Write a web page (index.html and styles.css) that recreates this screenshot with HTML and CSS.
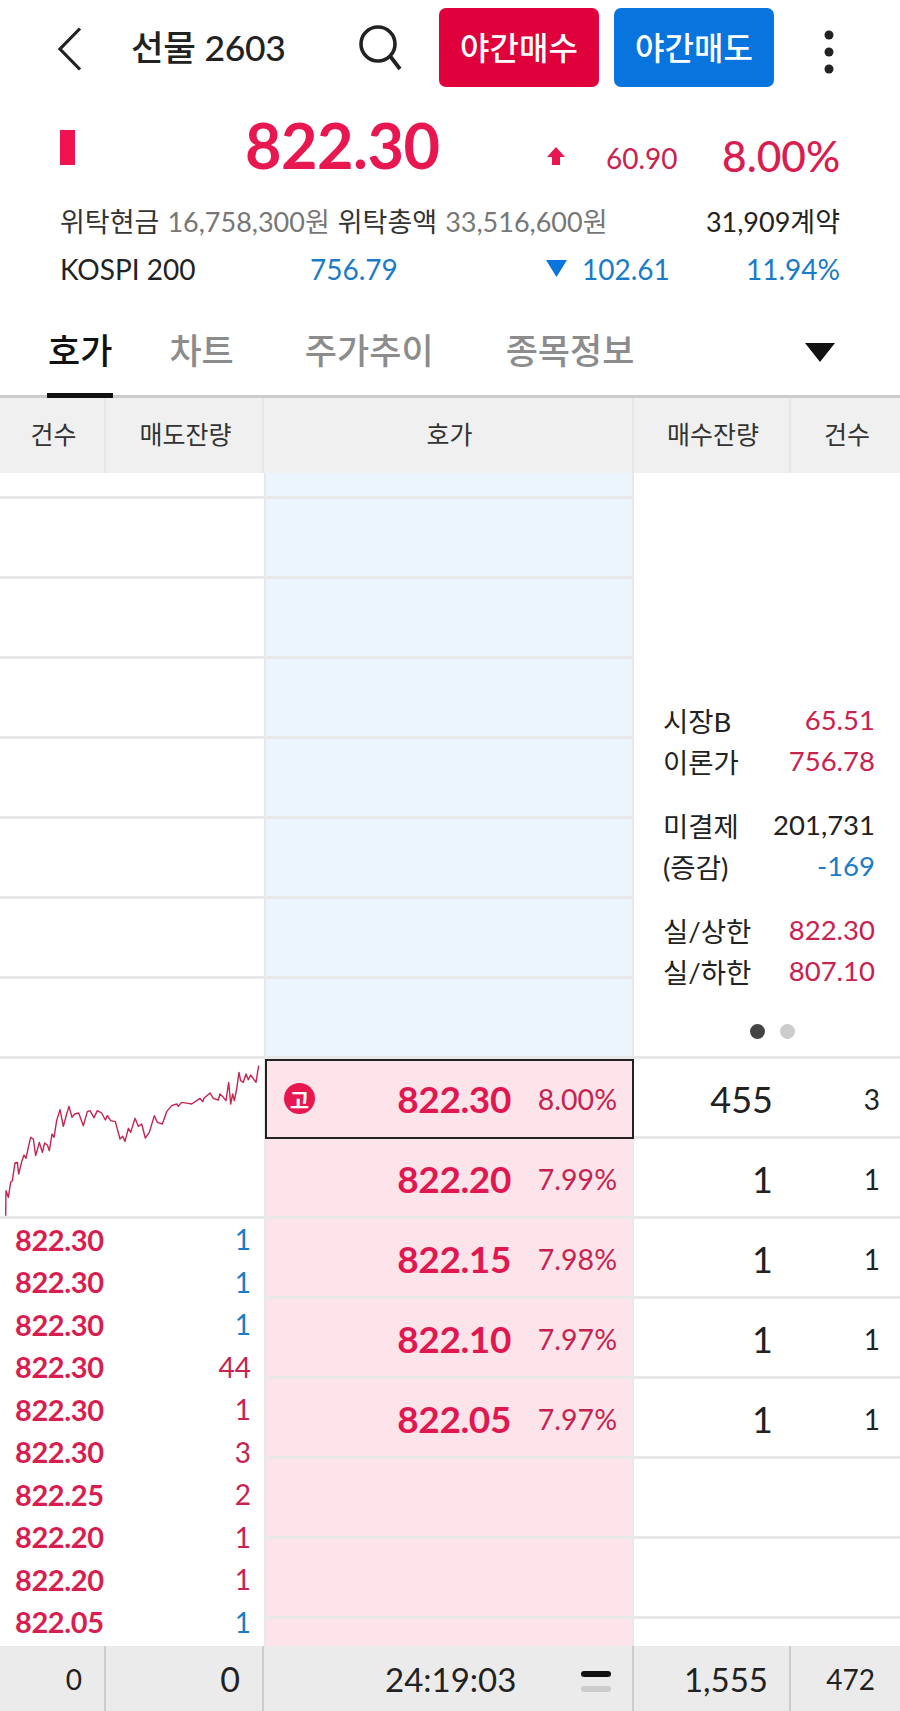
FILE: index.html
```html
<!DOCTYPE html>
<html lang="ko">
<head>
<meta charset="utf-8">
<title>선물 2603</title>
<link rel="stylesheet" href="styles.css">
</head>
<body>
<div class="page">
  <header class="topbar">
    <svg class="back" width="24" height="44" viewBox="0 0 24 44"><path d="M22 1.5 2 22l20 20.5" fill="none" stroke="#222" stroke-width="3.2"/></svg>
    <div class="title">선물 2603</div>
    <svg class="search" width="44" height="46" viewBox="0 0 44 46"><circle cx="20" cy="19" r="17" fill="none" stroke="#222" stroke-width="3.6"/><path d="M32 31l10 13" stroke="#222" stroke-width="3.8" fill="none"/></svg>
    <button class="btn buy">야간매수</button>
    <button class="btn sell">야간매도</button>
    <svg class="kebab" width="10" height="44" viewBox="0 0 10 44"><circle cx="5" cy="5" r="4.5" fill="#222"/><circle cx="5" cy="22" r="4.5" fill="#222"/><circle cx="5" cy="39" r="4.5" fill="#222"/></svg>
  </header>

  <section class="quote">
    <div class="mark"></div>
    <div class="bigprice">822.30</div>
    <svg class="uparrow" width="18" height="18" viewBox="0 0 18 18"><path d="M9 0l9 10h-5v8H5v-8H0z" fill="#e8174f"/></svg>
    <div class="diff">60.90</div>
    <div class="rate">8.00%</div>
  </section>

  <section class="info-row">
    <span class="lbl">위탁현금</span><span class="val">16,758,300원</span><span class="lbl gap">위탁총액</span><span class="val">33,516,600원</span>
    <span class="contracts">31,909계약</span>
  </section>
  <section class="index-row">
    <span class="idx-name">KOSPI 200</span>
    <span class="idx-val">756.79</span>
    <svg class="downarrow" width="21" height="17" viewBox="0 0 21 17"><path d="M0 0h21L10.500 17z" fill="#0875de"/></svg>
    <span class="idx-diff">102.61</span>
    <span class="idx-rate">11.94%</span>
  </section>

  <nav class="tabs">
    <a class="tab active">호가</a>
    <a class="tab t2">차트</a>
    <a class="tab t3">주가추이</a>
    <a class="tab t4">종목정보</a>
    <svg class="tabdrop" width="30" height="19" viewBox="0 0 30 19"><path d="M0 0h30L15 19z" fill="#111"/></svg>
  </nav>

  <div class="thead">
    <div class="th">건수</div>
    <div class="th">매도잔량</div>
    <div class="th">호가</div>
    <div class="th">매수잔량</div>
    <div class="th">건수</div>
  </div>

  <main class="book">
    <div class="col-left">
      <div class="row partial"></div>
      <div class="row"></div><div class="row"></div><div class="row"></div><div class="row"></div>
      <div class="row"></div><div class="row"></div><div class="row"></div>
      <div class="chart">
        <svg width="262" height="158" viewBox="0 60 786 474"><polyline fill="none" stroke="#c8224f" stroke-width="4.200" stroke-linejoin="round" points="17,530 18,455 25,475 32,430 37,425 45,372 52,370 56,405 66,365 72,348 78,358 85,325 92,295 100,300 107,350 118,310 127,340 134,312 142,318 148,335 156,285 162,295 170,245 180,212 190,262 200,225 207,202 216,235 224,225 236,222 250,260 262,218 270,215 282,236 292,215 305,222 316,243 322,230 332,245 346,248 360,300 368,292 375,307 385,268 392,280 405,238 415,262 425,255 436,297 448,280 463,230 472,250 487,255 500,218 515,200 530,195 535,202 545,190 565,193 575,195 600,178 608,188 612,178 630,162 640,178 655,183 660,165 670,175 678,185 686,130 692,195 698,165 703,185 710,150 717,100 722,125 730,130 738,105 745,122 752,108 768,130 776,80"/></svg>
      </div>
      <div class="ticks">
        <div class="tick"><b>822.30</b><span class="blue">1</span></div>
        <div class="tick"><b>822.30</b><span class="blue">1</span></div>
        <div class="tick"><b>822.30</b><span class="blue">1</span></div>
        <div class="tick"><b>822.30</b><span class="red">44</span></div>
        <div class="tick"><b>822.30</b><span class="red">1</span></div>
        <div class="tick"><b>822.30</b><span class="red">3</span></div>
        <div class="tick"><b>822.25</b><span class="red">2</span></div>
        <div class="tick"><b>822.20</b><span class="red">1</span></div>
        <div class="tick"><b>822.20</b><span class="red">1</span></div>
        <div class="tick"><b>822.05</b><span class="blue">1</span></div>
      </div>
    </div>

    <div class="col-mid">
      <div class="row partial ask"></div>
      <div class="row ask"></div><div class="row ask"></div><div class="row ask"></div><div class="row ask"></div>
      <div class="row ask"></div><div class="row ask"></div><div class="row ask"></div>
      <div class="row bid cur"><span class="badge">고</span><b class="price">822.30</b><span class="pct">8.00%</span></div>
      <div class="row bid"><b class="price">822.20</b><span class="pct">7.99%</span></div>
      <div class="row bid"><b class="price">822.15</b><span class="pct">7.98%</span></div>
      <div class="row bid"><b class="price">822.10</b><span class="pct">7.97%</span></div>
      <div class="row bid"><b class="price">822.05</b><span class="pct">7.97%</span></div>
      <div class="row bid"></div>
      <div class="row bid"></div>
      <div class="row bid last"></div>
    </div>

    <div class="col-right">
      <div class="panel">
        <div class="stats"><span>시장B</span><span class="red">65.51</span></div>
        <div class="stats"><span>이론가</span><span class="red">756.78</span></div>
        <div class="stats sep"><span>미결제</span><span>201,731</span></div>
        <div class="stats"><span>(증감)</span><span class="blue">-169</span></div>
        <div class="stats sep"><span>실/상한</span><span class="red">822.30</span></div>
        <div class="stats"><span>실/하한</span><span class="red">807.10</span></div>
        <div class="dots"><i class="dot on"></i><i class="dot"></i></div>
      </div>
      <div class="row qty"><span class="q">455</span><span class="c">3</span></div>
      <div class="row qty"><span class="q">1</span><span class="c">1</span></div>
      <div class="row qty"><span class="q">1</span><span class="c">1</span></div>
      <div class="row qty"><span class="q">1</span><span class="c">1</span></div>
      <div class="row qty"><span class="q">1</span><span class="c">1</span></div>
      <div class="row qty"></div>
      <div class="row qty"></div>
    </div>
  </main>

  <footer class="tfoot">
    <div class="tf f1">0</div>
    <div class="tf f2">0</div>
    <div class="tf f3"><span class="time">24:19:03</span><span class="eq"><i class="eq-a"></i><i class="eq-b"></i></span></div>
    <div class="tf f4">1,555</div>
    <div class="tf f5">472</div>
  </footer>
</div>
</body>
</html>
```

FILE: styles.css
```css
* { box-sizing: border-box; }
html, body { margin: 0; padding: 0; background: #fff; }
body { font-family: Lato, "Noto Sans CJK KR", sans-serif; color: #222; }
.page { width: 900px; height: 1711px; overflow: hidden; display: flex; flex-direction: column; }

/* top bar */
.topbar { height: 95px; flex: none; display: flex; align-items: flex-start; padding: 8px 0 0 58px; }
.back { margin-top: 19px; flex: none; }
.title { margin-left: 49px; margin-top: 18px; font-size: 35.5px; line-height: 44px; font-weight: 500; color: #222; width: 227px; flex: none; letter-spacing: -0.3px; white-space: nowrap; }
.search { margin-top: 17px; margin-right: 37px; flex: none; }
.btn { width: 160px; height: 79px; border: 0; border-radius: 7px; color: #fff; font-family: inherit; font-size: 32px; font-weight: 500; flex: none; padding: 0 0 4px; }
.buy { background: #e0003c; }
.sell { margin-left: 15px; background: #0875de; }
.kebab { margin: 22px 0 0 50px; flex: none; }

/* quote */
.quote { height: 103px; flex: none; display: flex; align-items: flex-start; padding-left: 60px; }
.mark { width: 15px; height: 35px; margin-top: 35px; background: #f0134f; flex: none; }
.bigprice { margin-left: 170px; margin-top: 19px; font-size: 63px; line-height: 62px; font-weight: 700; color: #e8174f; width: 302px; letter-spacing: -0.5px; flex: none; }
.uparrow { margin-top: 52px; flex: none; }
.diff { margin-left: 41px; margin-top: 48px; font-size: 28px; line-height: 30px; color: #c8224f; width: 116px; flex: none; }
.rate { margin-top: 39px; font-size: 42.5px; line-height: 44px; color: #d81e50; flex: none; font-weight: 500; }

.info-row, .index-row { flex: none; display: flex; align-items: center; padding: 0 60px; font-size: 27px; }
.info-row { height: 45px; }
.lbl { color: #333; margin-right: 8px; }
.lbl.gap { margin-left: 8px; }
.val { color: #777; }
.contracts { margin-left: auto; color: #222; }
.index-row { height: 51px; font-size: 28px; }
.idx-name { width: 250px; color: #222; }
.idx-val { color: #1a7cc8; width: 236px; }
.downarrow { flex: none; margin-right: 15px; }
.idx-diff { color: #1a7cc8; }
.idx-rate { color: #1a7cc8; margin-left: auto; }

/* tabs */
.tabs { height: 104px; flex: none; display: flex; align-items: flex-start; padding: 0 0 0 47px; border-bottom: 3px solid #ccc; }
.tab { margin-top: 32px; font-size: 35px; line-height: 48px; color: #8c8c8c; font-weight: 500; height: 72px; flex: none; padding: 0 1px; }
.tab.active { color: #111; border-bottom: 6px solid #111; height: 73px; }
.t2 { margin-left: 55px; }
.t3 { margin-left: 69px; }
.t4 { margin-left: 70px; }
.tabdrop { margin: 49px 0 0 170px; flex: none; }

/* table head */
.thead { height: 75px; flex: none; display: grid; grid-template-columns: 106px 158px 370px 157px 109px; background: #f0f0f0; }
.th { display: flex; align-items: center; justify-content: center; font-size: 25px; color: #333; border-right: 2px solid #e6e6e6; padding: 0 0 5px 3px; }
.th:last-child { border-right: 0; }

/* book */
.book { flex: 1; min-height: 0; display: grid; grid-template-columns: 264px 370px 266px; overflow: hidden; }
.row { height: 80px; border-bottom: 3px solid #e8e8e8; }
.row.partial { height: 26px; }
.col-left { display: flex; flex-direction: column; overflow: hidden; }
.chart { height: 160px; flex: none; border-bottom: 3px solid #e8e8e8; }
.chart svg { display: block; }
.col-left .row { flex: none; }
.ticks { padding: 0 13px 0 15px; margin-top: -1px; }
.tick { height: 42.5px; display: flex; justify-content: space-between; align-items: center; font-size: 29px; }
.tick b { color: #d81e50; font-weight: 700; letter-spacing: -0.4px; }
.tick span { font-size: 28px; }
.red { color: #c8224f; }
.blue { color: #1a7cc8; }

.col-mid { border-left: 2px solid #e8e8e8; border-right: 2px solid #e8e8e8; }
.ask { background: #ecf5fe; }
.bid { background: #fce4ea; display: flex; align-items: center; justify-content: flex-end; padding: 2px 15px 0 16px; }
.bid.last { height: 30px; border-bottom: 0; }
.bid.cur { margin: 0 -2px 0 -1px; padding-left: 19px; padding-right: 17px; outline: 2.5px solid #222; outline-offset: -2.5px; border-bottom-color: transparent; }
.badge { width: 31px; height: 31px; border-radius: 50%; background: #e8174f; color: #fff; font-size: 21px; font-weight: 700; display: flex; align-items: center; justify-content: center; margin-right: auto; flex: none; }
.price { font-size: 37px; color: #e0184f; font-weight: 700; letter-spacing: -0.4px; }
.pct { width: 106px; text-align: right; font-size: 28.500px; color: #c8224f; }

.col-right { overflow: hidden; }
.panel { height: 586px; border-bottom: 3px solid #e8e8e8; padding: 226px 25px 0 29px; font-size: 27.500px; }
.stats { height: 41px; display: flex; justify-content: space-between; align-items: center; color: #222; }
.stats.sep { margin-top: 23px; }
.dots { display: flex; gap: 15px; margin: 33px 0 0 87px; }
.dot { width: 15px; height: 15px; border-radius: 50%; background: #ccc; display: block; }
.dot.on { background: #444; }
.qty { display: flex; align-items: center; padding-top: 2px; }
.q { width: 139px; text-align: right; font-size: 36px; color: #222; flex: none; }
.c { width: 107px; text-align: right; font-size: 28px; color: #222; flex: none; }

/* footer */
.tfoot { height: 65px; flex: none; display: grid; grid-template-columns: 106px 158px 370px 157px 109px; background: #ebebeb; font-size: 33px; }
.tf { display: flex; align-items: center; justify-content: flex-end; border-right: 2px solid #ccc; color: #222; }
.tf:last-child { border-right: 0; }
.f1 { font-size: 28px; padding-right: 22px; }
.f2 { padding-right: 22px; font-size: 34px; }
.f3 { justify-content: flex-start; padding-left: 121px; }
.time { width: 190px; }
.eq { display: flex; flex-direction: column; gap: 9px; margin: 6px 0 0 6px; }
.eq-a { display: block; width: 30px; height: 6px; border-radius: 3px; background: #111; }
.eq-b { display: block; width: 30px; height: 6px; border-radius: 3px; background: #ccc; }
.f4 { padding-right: 21px; }
.f5 { font-size: 28px; padding-right: 25px; }
```
